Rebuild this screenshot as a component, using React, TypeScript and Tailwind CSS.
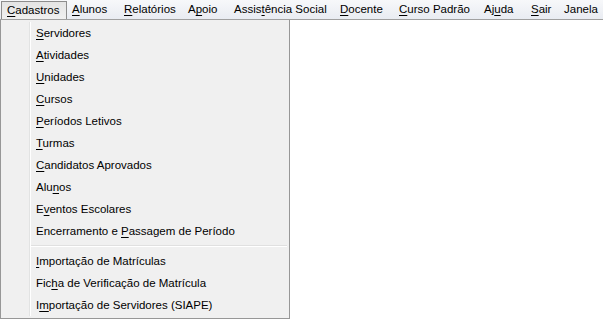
import React from "react";

type Label = [string, string, string];

const menus: { label: Label; w: string; open?: boolean }[] = [
  { label: ["", "C", "adastros"], w: "w-[66px]", open: true },
  { label: ["", "A", "lunos"], w: "w-[52px]" },
  { label: ["", "R", "elatórios"], w: "w-[64px]" },
  { label: ["A", "p", "oio"], w: "w-[46px]" },
  { label: ["Assis", "t", "ência Social"], w: "w-[106px]" },
  { label: ["", "D", "ocente"], w: "w-[59px]" },
  { label: ["", "C", "urso Padrão"], w: "w-[85px]" },
  { label: ["Aj", "u", "da"], w: "w-[47px]" },
  { label: ["", "S", "air"], w: "w-[33px]" },
  { label: ["Janela", "", ""], w: "w-[50px]" },
];

const groups: Label[][] = [
  [
    ["", "S", "ervidores"],
    ["", "A", "tividades"],
    ["", "U", "nidades"],
    ["", "C", "ursos"],
    ["", "P", "eríodos Letivos"],
    ["", "T", "urmas"],
    ["", "C", "andidatos Aprovados"],
    ["Alu", "n", "os"],
    ["E", "v", "entos Escolares"],
    ["Encerramento e ", "P", "assagem de Período"],
  ],
  [
    ["", "I", "mportação de Matrículas"],
    ["Fic", "h", "a de Verificação de Matrícula"],
    ["I", "m", "portação de Servidores (SIAPE)"],
  ],
];

function Mnemonic({ label }: { label: Label }) {
  return (
    <span className="whitespace-pre">
      {label[0]}
      {label[1] && <u className="underline-offset-[2px]">{label[1]}</u>}
      {label[2]}
    </span>
  );
}

export default function App() {
  return (
    <div
      className="h-[319px] w-[603px] overflow-hidden bg-white text-[11.5px] leading-none text-black"
      style={{ fontFamily: '"Liberation Sans", Arial, sans-serif' }}
    >
      <div className="flex h-[20px] items-stretch border-b border-[#a0a0a0] bg-gradient-to-b from-[#f7f8fa] to-[#e9ecf2] pl-[1px] pt-[1px]">
        {menus.map((m, i) => (
          <div
            key={i}
            className={`flex shrink-0 items-center pl-[5px] ${m.w} ${
              m.open
                ? "border border-b-0 border-[#8d8d8d] bg-gradient-to-b from-[#e4e4e4] to-[#f0f0f0] pl-[4px]"
                : ""
            }`}
          >
            <Mnemonic label={m.label} />
          </div>
        ))}
      </div>

      <div className="flex h-[299px] w-[290px] flex-col border border-t-0 border-[#979797] bg-[#f0f0f0] p-[2px]">
        {groups.map((g, gi) => (
          <React.Fragment key={gi}>
            {gi > 0 && (
              <div className="flex h-[8px] items-center">
                <div className="h-full w-[26px] shrink-0" />
                <div className="h-full w-[2px] shrink-0 border-l border-[#e2e3e3] bg-white" />
                <div className="flex-1">
                  <div className="h-[1px] bg-[#e0e0e0]" />
                  <div className="h-[1px] bg-white" />
                </div>
              </div>
            )}
            {g.map((item, ii) => (
              <div key={ii} className="flex h-[22px] items-stretch">
                <div className="w-[26px] shrink-0" />
                <div className="w-[2px] shrink-0 border-l border-[#e2e3e3] bg-white" />
                <div className="flex items-center pl-[5px] pt-[2px]">
                  <Mnemonic label={item} />
                </div>
              </div>
            ))}
          </React.Fragment>
        ))}
      </div>
    </div>
  );
}
